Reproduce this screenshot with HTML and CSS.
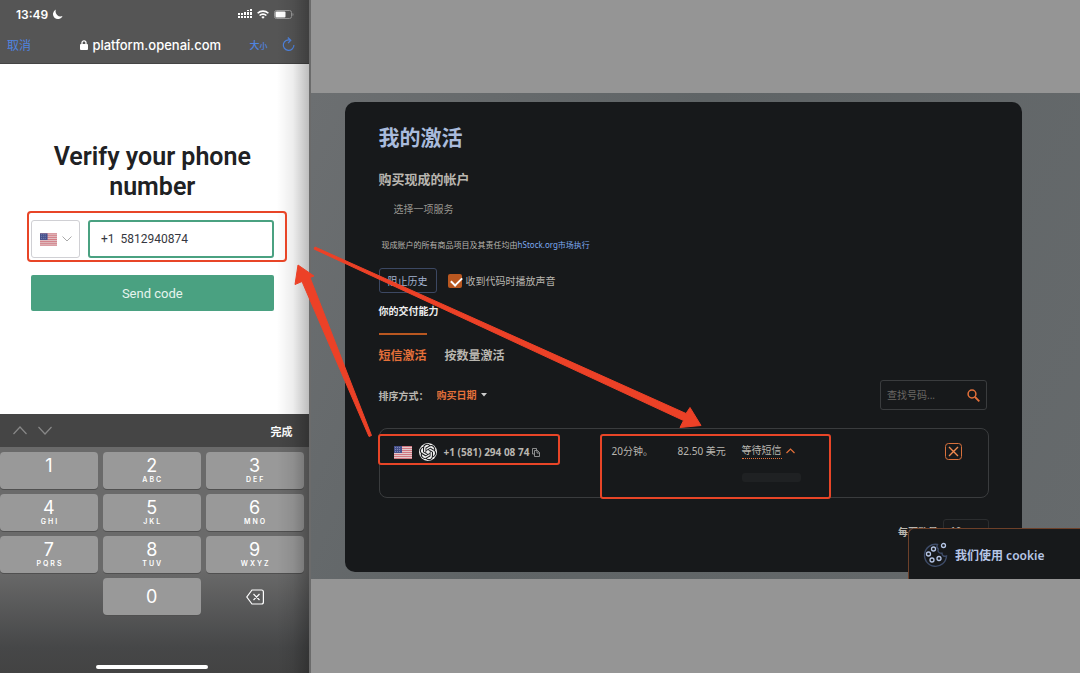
FILE: index.html
```
<!DOCTYPE html>
<html lang="zh-CN">
<head>
<meta charset="utf-8">
<title>我的激活</title>
<link rel="stylesheet" href="styles.css">
</head>
<body>
<svg class="defs" aria-hidden="true">
  <symbol id="flag" viewBox="0 0 18 13">
    <rect width="18" height="13" fill="#e3c9cb"/>
    <path d="M0 .5h18M0 2.5h18M0 4.5h18M0 6.5h18M0 8.5h18M0 10.5h18M0 12.5h18" stroke="#d07680"/>
    <rect width="8" height="7" fill="#46508c"/>
    <path d="M1 1.5h6M1 3.5h6M1 5.5h6" stroke="#8188b4" stroke-dasharray="1 1"/>
  </symbol>
</svg>

<div class="screen">
  <section class="phone">
    <header class="browser">
      <div class="status">
        <span class="clock">13:49
          <svg width="11" height="11" viewBox="0 0 11 11"><path d="M4 .5A5 5 0 1 0 10.600 7 5 5 0 0 1 4 .5z" fill="#fff"/></svg>
        </span>
        <span class="signals">
          <svg width="14" height="10" viewBox="0 0 14 10" fill="#fff"><path d="M0 7h2v2H0zM3 7h2v2H3zM6 7h2v2H6zM9 7h2v2H9zM12 7h2v2h-2zM0 4h2v2H0zM3 4h2v2H3zM6 3h2v3H6zM9 3h2v3H9zM12 3h2v3h-2zM9 1h2v1H9zM12 0h2v2h-2z"/></svg>
          <svg width="12" height="9" viewBox="0 0 12 9" fill="none" stroke="#fff" stroke-width="1.600"><path d="M.6 3.300a7.700 7.700 0 0 1 10.800 0M2.600 5.500a4.800 4.800 0 0 1 6.800 0"/><path d="M6 8.800 4.300 7a2.400 2.400 0 0 1 3.400 0z" fill="#fff" stroke="none"/></svg>
          <svg width="20" height="9" viewBox="0 0 20 9"><rect x=".5" y=".5" width="17" height="8" rx="2" fill="none" stroke="#999"/><rect x="1.500" y="1.500" width="10" height="6" rx="1" fill="#fff"/><path d="M18.500 3v3c1.300-.5 1.300-2.500 0-3z" fill="#999"/></svg>
        </span>
      </div>
      <div class="address">
        <button class="cancel">取消</button>
        <span class="host"><svg width="8" height="10" viewBox="0 0 8 10"><rect y="4" width="8" height="6" rx="1" fill="#fff"/><path d="M2 4.500V2.800a2 2 0 0 1 4 0v1.700" fill="none" stroke="#fff" stroke-width="1.300"/></svg>platform.openai.com</span>
        <span class="tools">
          <button class="textsize">大<small>小</small></button>
          <button aria-label="刷新"><svg width="13" height="15" viewBox="0 0 13 15" fill="none" stroke="#4f84e0" stroke-width="1.200"><path d="M8.500 3.200A5.300 5.300 0 1 0 11.900 8M5.800.5l3 2.700-2.700 3"/></svg></button>
        </span>
      </div>
    </header>

    <form class="verify">
      <h1>Verify your phone number</h1>
      <div class="number">
        <label class="country">
          <svg width="17" height="13"><use href="#flag"/></svg>
          <svg width="10" height="6" viewBox="0 0 10 6"><path d="M.5.5 5 5 9.500.5" fill="none" stroke="#aaa"/></svg>
          <select aria-label="Country"><option>US</option></select>
        </label>
        <input class="tel" type="text" aria-label="Phone number" value="+1  5812940874">
      </div>
      <button class="send" type="button">Send code</button>
    </form>

    <div class="keyboard">
      <div class="accessory">
        <span class="steppers">
          <button aria-label="上一个"><svg width="14" height="9" viewBox="0 0 14 9"><path d="M.5 8 7 1l6.500 7" fill="none" stroke="#888" stroke-width="1.200"/></svg></button>
          <button aria-label="下一个"><svg width="14" height="9" viewBox="0 0 14 9"><path d="M.5 1 7 8l6.500-7" fill="none" stroke="#888" stroke-width="1.200"/></svg></button>
        </span>
        <button class="done">完成</button>
      </div>
      <div class="keys">
        <button class="key">1<small>&nbsp;</small></button>
        <button class="key">2<small>ABC</small></button>
        <button class="key">3<small>DEF</small></button>
        <button class="key">4<small>GHI</small></button>
        <button class="key">5<small>JKL</small></button>
        <button class="key">6<small>MNO</small></button>
        <button class="key">7<small>PQRS</small></button>
        <button class="key">8<small>TUV</small></button>
        <button class="key">9<small>WXYZ</small></button>
        <span></span>
        <button class="key">0</button>
        <button class="key key-delete" aria-label="删除"><svg width="18" height="16" viewBox="0 0 18 16" fill="none" stroke="#fff" stroke-width="1.200"><path d="M6 1h9.500q1.900 0 1.900 2v10q0 2-1.900 2H6L.8 8zM7.500 5l6 6M13.500 5l-6 6"/></svg></button>
      </div>
      <span class="home"></span>
    </div>
  </section>

  <main class="desktop">
    <div class="backdrop">
      <div class="card">
        <h1>我的激活</h1>
        <h2>购买现成的帐户</h2>
        <p class="pick">选择一项服务</p>
        <p class="note">现成账户的所有商品项目及其责任均由<a href="#">hStock.org市场执行</a></p>
        <div class="options">
          <button class="history">阻止历史</button>
          <label class="sound"><input type="checkbox" checked>收到代码时播放声音</label>
        </div>
        <p class="delivery">你的交付能力</p>
        <nav class="tabs">
          <a class="active" href="#">短信激活</a>
          <a href="#">按数量激活</a>
        </nav>
        <div class="filters">
          <label for="sort">排序方式：</label>
          <span class="sort"><select id="sort"><option>购买日期</option></select><svg width="6" height="4" viewBox="0 0 6 4"><path d="M0 0h6L3 3.500z" fill="#ccc"/></svg></span>
          <div class="search">
            <input type="text" aria-label="查找号码" placeholder="查找号码...">
            <button aria-label="搜索"><svg width="13" height="13" viewBox="0 0 13 13" fill="none" stroke="#e4703a" stroke-width="1.500"><circle cx="5" cy="5" r="3.900"/><path d="m8 8 4.300 4.300" stroke-width="1.800"/></svg></button>
          </div>
        </div>
        <article class="order">
          <div class="line">
            <svg width="18" height="13"><use href="#flag"/></svg>
            <svg width="18" height="18" viewBox="0 0 18 18"><circle cx="9" cy="9" r="9" fill="#eee"/><path transform="translate(.8 .8) scale(.683)" fill="#17191b" d="M22.2819 9.8211a5.9847 5.9847 0 0 0-.5157-4.9108 6.0462 6.0462 0 0 0-6.5098-2.9A6.0651 6.0651 0 0 0 4.9807 4.1818a5.9847 5.9847 0 0 0-3.9977 2.9 6.0462 6.0462 0 0 0 .7427 7.0966 5.98 5.98 0 0 0 .511 4.9107 6.051 6.051 0 0 0 6.5146 2.9001A5.9847 5.9847 0 0 0 13.2599 24a6.0557 6.0557 0 0 0 5.7718-4.2058 5.9894 5.9894 0 0 0 3.9977-2.9001 6.0557 6.0557 0 0 0-.7475-7.0729zm-9.022 12.6081a4.4755 4.4755 0 0 1-2.8764-1.0408l.1419-.0804 4.7783-2.7582a.7948.7948 0 0 0 .3927-.6813v-6.7369l2.02 1.1686a.071.071 0 0 1 .038.052v5.5826a4.504 4.504 0 0 1-4.4945 4.4944zm-9.6607-4.1254a4.4708 4.4708 0 0 1-.5346-3.0137l.142.0852 4.783 2.7582a.7712.7712 0 0 0 .7806 0l5.8428-3.3685v2.3324a.0804.0804 0 0 1-.0332.0615L9.74 19.9502a4.4992 4.4992 0 0 1-6.1408-1.6464zM2.3408 7.8956a4.485 4.485 0 0 1 2.3655-1.9728V11.6a.7664.7664 0 0 0 .3879.6765l5.8144 3.3543-2.0201 1.1685a.0757.0757 0 0 1-.071 0l-4.8303-2.7865A4.504 4.504 0 0 1 2.3408 7.872zm16.5963 3.8558L13.1038 8.364 15.1192 7.2a.0757.0757 0 0 1 .071 0l4.8303 2.7913a4.4944 4.4944 0 0 1-.6765 8.1042v-5.6772a.79.79 0 0 0-.407-.667zm2.0107-3.0231l-.142-.0852-4.7735-2.7818a.7759.7759 0 0 0-.7854 0L9.409 9.2297V6.8974a.0662.0662 0 0 1 .0284-.0615l4.8303-2.7866a4.4992 4.4992 0 0 1 6.6802 4.66zM8.3065 12.863l-2.02-1.1638a.0804.0804 0 0 1-.038-.0567V6.0742a4.4992 4.4992 0 0 1 7.3757-3.4537l-.142.0805L8.704 5.459a.7948.7948 0 0 0-.3927.6813zm1.0976-2.3654l2.602-1.4998 2.6069 1.4998v2.9994l-2.5974 1.4997-2.6067-1.4997Z"/></svg>
            <b>+1 (581) 294 08 74</b>
            <button class="copy" aria-label="复制"><svg width="8" height="9" viewBox="0 0 8 9" fill="none" stroke="#aaa" stroke-width=".8"><path d="M2.500 6H.5V.5h4V2M2.500 2.500h3l2 2v4h-5zM5 2.500V5h2.500"/></svg></button>
          </div>
          <span class="cell">20分钟。</span>
          <span class="cell">82.50 美元</span>
          <div class="state">
            <span class="cell"><span class="waiting">等待短信</span> <svg width="9" height="6" viewBox="0 0 9 6"><path d="M.5 5 4.500 1l4 4" fill="none" stroke="#e4703a" stroke-width="1.200"/></svg></span>
            <span class="skeleton"></span>
          </div>
          <button class="close" aria-label="取消激活"><svg width="17" height="17" viewBox="0 0 17 17" fill="none" stroke="#d9713c"><rect x=".5" y=".5" width="16" height="16" rx="3"/><path d="m4 4 9 9M13 4l-9 9" stroke="#f08a50" stroke-width="1.400"/></svg></button>
        </article>
        <div class="pager">
          <label for="size">每页数量</label>
          <select id="size"><option>10</option></select>
        </div>
      </div>
      <aside class="cookie">
        <svg width="25" height="26" viewBox="0 0 25 26" fill="none"><path d="M14.500 2.500A11 11 0 1 0 23.500 14c-2.500.8-4.500-.4-4.500-2.800-3 .3-4.800-1.700-3.700-4.200-1.300-1-1.700-3-.8-4.500z" stroke="#3e4c69" stroke-width="1.400"/><g stroke="#b6c6e6" stroke-width="1.300"><circle cx="20.500" cy="3.500" r="2"/><circle cx="10.500" cy="7" r="2"/><circle cx="5.500" cy="12" r="2"/><circle cx="9" cy="18" r="2"/><circle cx="16" cy="16.500" r="2"/></g></svg>
        我们使用 cookie
      </aside>
    </div>
  </main>

  <svg class="marks" aria-hidden="true">
    <g fill="none" stroke="#e84527" stroke-width="2">
      <rect x="28" y="212" width="258" height="49" rx="3"/>
      <rect x="379" y="435" width="180" height="29" rx="2"/>
      <rect x="601" y="435" width="229" height="63" rx="2"/>
    </g>
    <g fill="#ec4127" stroke="#ec4127" stroke-linejoin="round">
      <path d="M315 247 686 413.500l4-6L701 425.500l-21 2 3.500-7L314 249z"/>
      <path d="m298 265 16 11-4 1.500 61.500 158-2.500 1L302 281.500l-7 3z"/>
    </g>
  </svg>
</div>
</body>
</html>
```
FILE: styles.css
```
* { box-sizing: border-box; }

body {
  margin: 0;
  font-family: "Noto Sans", "Noto Sans CJK SC", sans-serif;
  font-size: 10px;
}

h1, h2, p { margin: 0; }
svg { display: block; flex: none; }
a { color: inherit; text-decoration: none; }

button, input, select {
  margin: 0;
  padding: 0;
  border: 0;
  background: none;
  color: inherit;
  font: inherit;
  appearance: none;
}

.defs { position: absolute; width: 0; height: 0; }

.screen {
  position: relative;
  display: grid;
  grid-template-columns: 2fr 5fr;
  min-height: 100vh;
  overflow: hidden;
}

.marks {
  position: absolute;
  inset: 0;
  width: 100%;
  height: 100%;
  pointer-events: none;
}

/* Phone */
.phone {
  position: relative;
  display: flex;
  flex-direction: column;
  background: #fff;
  font-family: Inter, "Noto Sans CJK SC", sans-serif;
}

.phone::after {
  content: "";
  position: absolute;
  inset: 0 0 0 auto;
  width: 32px;
  background: linear-gradient(90deg, transparent, rgba(0, 0, 0, .07) 50%, rgba(0, 0, 0, .26));
  pointer-events: none;
}

.browser {
  height: 64px;
  background: #555;
  border-bottom: 1px solid #444;
  color: #fff;
}

.status {
  display: flex;
  align-items: center;
  justify-content: space-between;
  height: 28px;
  padding: 0 15px 0 16px;
}

.clock {
  display: flex;
  align-items: center;
  gap: 4px;
  font-size: 12px;
  font-weight: 600;
}

.signals { display: flex; align-items: center; gap: 5px; }

.address {
  display: grid;
  grid-template-columns: 1fr auto 1fr;
  align-items: center;
  height: 33px;
  padding: 0 14px 0 7px;
}

.cancel { justify-self: start; color: #4f84e0; font-size: 12px; }
.host { display: flex; align-items: center; gap: 4px; font-size: 13px; font-weight: 500; }
.tools { display: flex; align-items: center; justify-content: flex-end; gap: 14px; }
.textsize { color: #4f84e0; font-size: 10px; font-weight: 500; }
.textsize small { font-size: 8px; }

.verify {
  flex: 1;
  padding: 78px 35px 0 31px;
}

.verify h1 {
  color: #202123;
  font-family: Roboto, sans-serif;
  font-size: 25px;
  font-weight: 600;
  line-height: 30px;
  text-align: center;
}

.number { display: flex; gap: 8px; margin-top: 18px; }

.country {
  position: relative;
  display: flex;
  align-items: center;
  justify-content: center;
  gap: 5px;
  width: 49px;
  border: 1px solid #d0d0d4;
  border-radius: 3px;
}

.country select { position: absolute; inset: 0; width: 100%; opacity: 0; }

.tel {
  flex: 1;
  min-width: 0;
  height: 38px;
  padding: 0 11px;
  border: 2px solid #4aa181;
  border-radius: 3px;
  color: #353740;
  font-family: Roboto, sans-serif;
  font-size: 12px;
}

.send {
  width: 100%;
  height: 36px;
  margin-top: 17px;
  border-radius: 2px;
  background: #4aa181;
  color: #e6f4ee;
  font-family: Roboto, sans-serif;
  font-size: 13px;
}

.keyboard {
  display: flex;
  flex-direction: column;
  height: 259px;
  background: linear-gradient(#6a6a6a 60%, #464748 90%, #434343);
}

.accessory {
  display: flex;
  align-items: center;
  justify-content: space-between;
  height: 33px;
  padding: 0 16px 0 13px;
  background: #454545;
  color: #fff;
}

.steppers { display: flex; gap: 11px; }
.done { font-size: 11px; font-weight: 700; }

.keys {
  display: grid;
  grid-template-columns: repeat(3, 1fr);
  grid-auto-rows: 37px;
  gap: 5px;
  padding: 5px 5px 0 0;
}

.key {
  display: flex;
  flex-direction: column;
  align-items: center;
  justify-content: center;
  border-radius: 4px;
  background: #999;
  box-shadow: 0 1px 0 #505050;
  color: #fff;
  font-size: 18px;
  line-height: 18px;
}

.key small {
  padding-left: 2px;
  font-size: 7px;
  font-weight: 600;
  letter-spacing: 2px;
  line-height: 10px;
}

.key-delete { background: none; box-shadow: none; }

.home {
  width: 112px;
  height: 4px;
  margin: auto 101px 4px auto;
  border-radius: 2px;
  background: #fff;
}

/* Desktop */
.desktop {
  display: flex;
  padding: 93px 0 94px;
  border-left: 2px solid #6b6b6b;
  background: #959595;
}

.backdrop {
  position: relative;
  flex: 1;
  padding: 9px 58px 7px 34px;
  background: linear-gradient(115deg, #6c6f71, #5f6466 40%, #666a6c);
}

.card {
  height: 100%;
  padding: 19px 33px 0 34px;
  border-radius: 10px;
  background: #17191b;
  color: #b9b6b0;
}

.card h1 { color: #a9bbdc; font-size: 21px; font-weight: 600; line-height: 32px; }
.card h2 { margin-top: 16px; font-size: 13px; font-weight: 600; line-height: 20px; }
.pick { margin-top: 12px; padding-left: 15px; color: #98958f; line-height: 16px; }
.note { margin-top: 22px; padding-left: 3px; font-size: 8px; line-height: 12px; }
.note a { color: #7da9f0; }

.options { display: flex; align-items: center; gap: 11px; margin-top: 17px; }

.history {
  height: 25px;
  padding: 0 8px;
  border: 1px solid #3c4863;
  border-radius: 3px;
  color: #a3b3d0;
}

.sound { display: flex; align-items: center; gap: 4px; }

.sound input {
  width: 14px;
  height: 14px;
  border-radius: 2px;
  background: #b95720;
}

.sound input:checked::before {
  content: "";
  display: block;
  width: 9px;
  height: 5px;
  margin: 3px;
  border: solid #fff;
  border-width: 0 0 2px 2px;
  transform: rotate(-45deg);
}

.delivery { margin-top: 10px; color: #eee; font-weight: 700; line-height: 16px; }

.tabs { display: flex; gap: 18px; margin-top: 14px; font-size: 12px; font-weight: 600; line-height: 20px; }
.tabs a { padding-top: 11px; border-top: 2px solid transparent; }
.tabs .active { border-color: #b95720; color: #e4703a; }

.filters { display: flex; align-items: center; height: 30px; margin-top: 14px; padding-right: 2px; font-weight: 600; }
.sort { display: flex; align-items: center; gap: 4px; margin-left: 8px; color: #e4703a; }

.search {
  display: flex;
  align-items: center;
  width: 107px;
  height: 30px;
  margin-left: auto;
  padding: 0 6px;
  border: 1px solid #3a3c3e;
  border-radius: 3px;
  font-weight: 400;
}

.search input { flex: 1; min-width: 0; }
.search input::placeholder { color: #6a6763; opacity: 1; }

.order {
  display: grid;
  grid-template-columns: 218px 66px 64px 1fr 17px;
  align-items: start;
  height: 70px;
  margin-top: 18px;
  padding: 14px 26px 0 14px;
  border: 1px solid #3a3c3e;
  border-radius: 8px;
}

.line { display: flex; align-items: center; height: 18px; }
.line svg + svg { margin: 0 7px; }
.line b { font-weight: 700; }
.copy { margin-left: 3px; }
.cell { display: flex; align-items: center; gap: 4px; line-height: 16px; }
.waiting { border-bottom: 1px dotted #e4703a; line-height: 15px; }
.skeleton { display: block; width: 59px; height: 9px; margin-top: 14px; border-radius: 3px; background: #1f2123; }

.pager { display: flex; align-items: center; justify-content: flex-end; gap: 5px; margin-top: 21px; font-weight: 600; }
.pager select { width: 46px; height: 24px; padding: 0 6px; border: 1px solid #2b2d2f; border-radius: 3px; }

.cookie {
  position: absolute;
  right: 0;
  bottom: 0;
  display: flex;
  align-items: center;
  gap: 7px;
  width: 172px;
  height: 51px;
  padding: 2px 14px 0;
  border: solid #6d4029;
  border-width: 1px 0 0 1px;
  border-radius: 6px 0 0 0;
  background: #17191b;
  color: #b6c6e6;
  font-size: 12px;
  font-weight: 600;
}
```
